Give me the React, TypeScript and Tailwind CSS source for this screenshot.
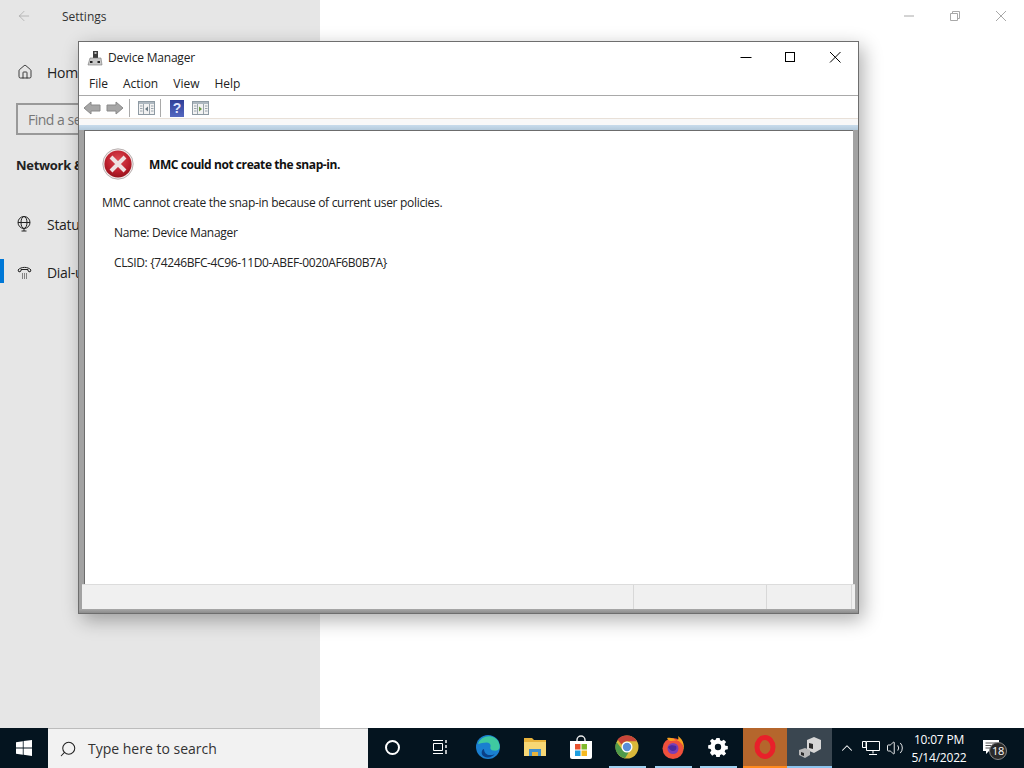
import { ArrowLeft, Home, Search, ChevronUp, Volume2 } from "lucide-react";

const segoe = "font-['Open_Sans','Noto_Sans',sans-serif]";

function WinControls() {
  return (
    <div className="mb-[2px] flex items-center gap-[33px] pr-[17px] text-black">
      <svg width="12" height="12" viewBox="0 0 12 12" className="-mr-[1px]"><path d="M0.500 6.500h11" stroke="currentColor" fill="none" /></svg>
      <svg width="12" height="12" viewBox="0 0 12 12"><rect x="1.500" y="1.500" width="9" height="9" stroke="currentColor" fill="none" /></svg>
      <svg width="12" height="12" viewBox="0 0 12 12"><path d="M1 1l10.500 10.500M11.500 1L1 11.500" stroke="currentColor" fill="none" /></svg>
    </div>
  );
}

function RestoreControls() {
  return (
    <div className="flex h-8 items-center justify-end gap-[34px] pr-[17px] text-[#a8a8a8]">
      <svg width="12" height="12" viewBox="0 0 12 12"><path d="M1 6h10" stroke="currentColor" fill="none" /></svg>
      <svg width="12" height="12" viewBox="0 0 12 12"><path d="M1.500 3.500h7v7h-7zM3.500 3.500v-2h7v7h-2" stroke="currentColor" fill="none" /></svg>
      <svg width="12" height="12" viewBox="0 0 12 12"><path d="M1 1l10 10M11 1L1 11" stroke="currentColor" fill="none" /></svg>
    </div>
  );
}

function DeviceIcon() {
  return (
    <svg width="16" height="16" viewBox="0 0 16 16">
      <rect x="6" y="1" width="5" height="7" fill="#3c3c3c" />
      <rect x="7.500" y="2" width="2" height="2" fill="#bdbdbd" />
      <path d="M3 8h11l1 7H1z" fill="#c9c9c9" stroke="#777" strokeWidth="0.6" />
      <rect x="3" y="11" width="2.500" height="2" fill="#222" />
      <rect x="10.500" y="11" width="2.500" height="2" fill="#222" />
    </svg>
  );
}

function NavArrow({ flip }: { flip?: boolean }) {
  return (
    <svg width="18" height="14" viewBox="0 0 18 14" className={flip ? "-scale-x-100" : ""}>
      <path d="M1 7l7-6v3h9v6H8v3z" fill="#a6a6a6" stroke="#8a8a8a" />
    </svg>
  );
}

function PaneIcon({ play }: { play?: boolean }) {
  return (
    <svg width="17" height="14" viewBox="0 0 17 14">
      <rect x="0.500" y="0.500" width="16" height="13" fill="#f2f2f2" stroke="#8e9aa3" />
      <rect x="1" y="1" width="15" height="2" fill="#aeb8c0" />
      <path d="M5.500 3v10M11.500 3v10" stroke="#9aa4ac" />
      <path d="M2 5h2.500M2 7.500h2.500M2 10h2.500M13 5h2.500M13 7.500h2.500M13 10h2.500" stroke="#9aa4ac" />
      {play
        ? <path d="M7 5.500l3 2.500-3 2.500z" fill="#6b9a45" />
        : <path d="M10 5.500L7 8l3 2.500z" fill="#6c7b86" />}
    </svg>
  );
}

function HelpIcon() {
  return (
    <div className="flex h-[17px] w-[14px] items-center justify-center bg-[linear-gradient(#2f3f98,#5568c0)] font-['Liberation_Sans',sans-serif] text-[14px] font-bold leading-none text-[#dfe4ff]">
      ?
    </div>
  );
}

function ErrorIcon() {
  return (
    <svg width="32" height="32" viewBox="0 0 32 32">
      <defs>
        <radialGradient id="err" cx="50%" cy="35%" r="70%">
          <stop offset="0%" stopColor="#dc4a52" />
          <stop offset="60%" stopColor="#bd1f2d" />
          <stop offset="100%" stopColor="#8d1018" />
        </radialGradient>
      </defs>
      <circle cx="16" cy="16" r="15.200" fill="#f4eaea" stroke="#a8a0a0" strokeWidth="0.8" />
      <circle cx="16" cy="16" r="13.600" fill="url(#err)" />
      <path d="M9 9l14 14M23 9L9 23" stroke="#eee2e2" strokeWidth="4" />
    </svg>
  );
}

function MmcWindow() {
  return (
    <div className={`absolute left-[78px] top-[41px] flex h-[573px] w-[781px] flex-col border border-[#6e6e6e] bg-white shadow-[4px_6px_18px_rgba(0,0,0,0.32)] ${segoe}`}>
      <div className="flex h-[32px] items-center justify-between pl-[8px]">
        <div className="flex items-center gap-[5px]">
          <DeviceIcon />
          <span className="text-[12px] tracking-[-0.2px] text-[#222]">Device Manager</span>
        </div>
        <WinControls />
      </div>
      <div className="flex h-[22px] items-center gap-[15px] border-b border-[#a9a9a9] pb-[2px] pl-[10px] text-[12px] text-[#222]">
        <span>File</span>
        <span>Action</span>
        <span>View</span>
        <span>Help</span>
      </div>
      <div className="flex h-[22px] items-center pl-[4px] pt-[2px]">
        <NavArrow />
        <span className="w-[5px]" />
        <NavArrow flip />
        <span className="ml-[5px] h-[18px] w-px bg-[#a9a9a9]" />
        <span className="ml-[8px]"><PaneIcon /></span>
        <span className="ml-[5px] h-[18px] w-px bg-[#a9a9a9]" />
        <span className="ml-[9px]"><HelpIcon /></span>
        <span className="ml-[8px]"><PaneIcon play /></span>
      </div>
      <div className="h-[1px] bg-[#e8e0d8]" />
      <div className="h-[6px] bg-[#f8f8f8]" />
      <div className="h-[5px] bg-[linear-gradient(#c8dcec,#b4cadc)]" />
      <div className="flex min-h-0 flex-1 flex-col bg-[#a2a2a2]">
        <div className="flex min-h-0 flex-1 pl-[5px] pr-[5px]">
          <div className="flex flex-1 flex-col border-l border-t border-[#6c6c6c] bg-white pl-[17px] text-[12px] tracking-[-0.3px] text-[#222]">
            <div className="mt-[17px] flex items-center gap-[15px]">
              <ErrorIcon />
              <span className="pt-[2px] font-bold tracking-[-0.43px] text-[#111]">MMC could not create the snap-in.</span>
            </div>
            <p className="mt-[15px] leading-[16px]">MMC cannot create the snap-in because of current user policies.</p>
            <p className="mt-[14px] pl-[12px] leading-[16px]">Name: Device Manager</p>
            <p className="mt-[14px] pl-[12px] leading-[16px] tracking-[-0.37px]">CLSID: {"{74246BFC-4C96-11D0-ABEF-0020AF6B0B7A}"}</p>
          </div>
        </div>
        <div className="mx-[3px] flex h-[25px] border-t border-[#dcdcdc] bg-[#f0f0f0]">
          <div className="w-[552px] border-r border-[#d8d8d8]" />
          <div className="w-[133px] border-r border-[#d8d8d8]" />
          <div className="w-[85px] border-r border-[#d8d8d8]" />
        </div>
        <div className="h-[4px] bg-[linear-gradient(#a8a8a8,#8c8c8c)]" />
      </div>
    </div>
  );
}

function Sidebar() {
  return (
    <div className={`flex w-[320px] flex-col bg-[#e6e6e6] tracking-[-0.3px] text-[#222] ${segoe}`}>
      <div className="flex h-8 items-center pl-[16px]">
        <ArrowLeft size={16} strokeWidth={1} className="text-[#a0a0a0]" />
        <span className="ml-[30px] pt-[2px] text-[12px] tracking-normal text-[#333]">Settings</span>
      </div>
      <div className="mt-[24px] flex h-8 items-center pl-[17px]">
        <Home size={16} strokeWidth={1.3} />
        <span className="ml-[14px] text-[14px]">Home</span>
      </div>
      <div className="ml-[16px] mr-[16px] mt-[15px] flex h-[32px] items-center border-2 border-[#999] pl-[10px] text-[14px] tracking-[-0.5px] text-[#777]">
        Find a setting
      </div>
      <div className="mt-[20px] pl-[16px] text-[13px] font-bold leading-[20px]">Network &amp; Internet</div>
      <div className="mt-[33px] flex h-8 items-center pl-[16px] text-[14px]">
        <svg width="16" height="16" viewBox="0 0 16 16" fill="none" stroke="#222">
          <circle cx="8" cy="6.500" r="6" />
          <ellipse cx="8" cy="6.500" rx="3" ry="6" />
          <path d="M2 6.500h12M8 12.500V15M5.500 15h5" />
        </svg>
        <span className="ml-[15px]">Status</span>
      </div>
      <div className="relative mt-[16px] flex h-8 items-center pl-[17px] text-[14px]">
        <span className="absolute left-0 top-[3px] h-[24px] w-[4px] bg-[#0078d7]" />
        <svg width="15" height="15" viewBox="0 0 15 15" fill="none" stroke="#222">
          <path d="M1 5c3-3.500 10-3.500 13 0l-1 2-2-1V4.500h-7V6l-2 1z" />
          <path d="M5 9h1M7 9h1M9 9h1M5 11h1M7 11h1M9 11h1M5 13h1M7 13h1M9 13h1" />
        </svg>
        <span className="ml-[15px]">Dial-up</span>
      </div>
    </div>
  );
}

function TaskItem({ children, w, bar, bg }: { children: React.ReactNode; w: string; bar?: string; bg?: string }) {
  return (
    <div className={`flex h-full flex-col items-center ${w} ${bg ?? ""}`}>
      <div className="flex flex-1 items-center justify-center">{children}</div>
      <div className={`h-[2px] ${bar ?? ""}`} />
    </div>
  );
}

function Taskbar() {
  return (
    <div className={`flex h-10 shrink-0 bg-[#04141f] text-white ${segoe}`}>
      <div className="flex w-[48px] items-center justify-center">
        <svg width="16" height="16" viewBox="0 0 16 16" fill="#fff">
          <path d="M0 2.200l6.800-1V7.600H0zM7.600 1.100L16 0v7.600H7.600zM0 8.400h6.800v6.400l-6.800-1zM7.600 8.400H16V16l-8.400-1.200z" />
        </svg>
      </div>
      <div className="flex w-[320px] items-center border-t border-[#bcbcbc] bg-[#f2f2f2] pl-[11px] text-[14px] text-[#333]">
        <Search size={18} strokeWidth={1.4} className="-scale-x-100 text-[#222]" />
        <span className="ml-[11px]">Type here to search</span>
      </div>
      <div className="flex">
        <TaskItem w="w-[48px]">
          <span className="h-[15px] w-[15px] rounded-full border-2 border-white" />
        </TaskItem>
        <TaskItem w="w-[48px]">
          <svg width="16" height="16" viewBox="0 0 16 16" fill="none" stroke="#fff">
            <path d="M1 1.500h10M1 14.500h10M1.500 4.500h9v7h-9z" />
            <path d="M14 1v3M14 6v3M14 11v4" strokeWidth="1.400" />
          </svg>
        </TaskItem>
        <TaskItem w="w-[48px]">
          <svg width="24" height="24" viewBox="0 0 24 24">
            <circle cx="12" cy="12" r="12" fill="#1a7fd0" />
            <path d="M2 9C4 2 13-1 19 3c4 2.600 5 7 4.500 10-.5 2-3 3-6 2.500-3-.5-3.500-2-3-4 .5-2-1-4-4-4-3 0-6 1-8.500 1.500z" fill="#3fc9a0" />
            <path d="M8 14c0 4 3 6.500 7 6 1.500 0 3-.5 4-1.500-2 3.500-7 5-11 3C4 19 6 14 8 14z" fill="#0b3f86" />
          </svg>
        </TaskItem>
        <TaskItem w="w-[46px]">
          <svg width="22" height="20" viewBox="0 0 22 20">
            <path d="M0 1h8l2 2h12v16H0z" fill="#e8b33c" />
            <rect x="0" y="5" width="22" height="14" fill="#f7d774" />
            <rect x="5" y="12" width="12" height="7" fill="#3f8fcf" />
            <rect x="8" y="15" width="6" height="4" fill="#e8b33c" />
          </svg>
        </TaskItem>
        <TaskItem w="w-[46px]">
          <svg width="22" height="24" viewBox="0 0 22 24">
            <path d="M7 7V5a4 4 0 018 0v2" fill="none" stroke="#eee" strokeWidth="1.400" />
            <path d="M0 6h22v16a2 2 0 01-2 2H2a2 2 0 01-2-2z" fill="#fff" />
            <rect x="5" y="9" width="5.500" height="5.500" fill="#e8512c" />
            <rect x="11.500" y="9" width="5.500" height="5.500" fill="#7fb92c" />
            <rect x="5" y="15.500" width="5.500" height="5.500" fill="#1f9fe0" />
            <rect x="11.500" y="15.500" width="5.500" height="5.500" fill="#f5b921" />
          </svg>
        </TaskItem>
        <TaskItem w="w-[46px]" bar="w-[37px] bg-[#9fd0f0]">
          <svg width="24" height="24" viewBox="0 0 24 24">
            <circle cx="12" cy="12" r="11.500" fill="#d9b83a" />
            <path d="M12 .5a11.500 11.500 0 019.960 5.750H12a5.750 5.750 0 00-5.300 3.500L2.500 4.500A11.500 11.500 0 0112 .5z" fill="#c8453a" />
            <path d="M1.500 7a11.500 11.500 0 008.500 16.300l4-6.500a5.750 5.750 0 01-7.300-3z" fill="#4f9a4a" />
            <circle cx="12" cy="12" r="5.500" fill="#fff" />
            <circle cx="12" cy="12" r="4.200" fill="#5a8fd8" />
          </svg>
        </TaskItem>
        <TaskItem w="w-[46px]" bar="w-[37px] bg-[#9fd0f0]">
          <svg width="24" height="24" viewBox="0 0 24 24">
            <circle cx="12" cy="13.500" r="10.500" fill="#f0503c" />
            <path d="M6 3c1 2 2 3 4 3 4-1 8-1 10 2 2 2 3 5 2 9 2-5 1-12-5-16 1 3 0 4-1 5-3-3-7-4-10-3z" fill="#f9a21e" />
            <circle cx="12" cy="13.500" r="5.500" fill="#7b3fb5" />
            <path d="M7 12c2-2 5-2 8-1 1 2 0 5-3 5-2 0-4-2-5-4z" fill="#4b2a9e" />
          </svg>
        </TaskItem>
        <TaskItem w="w-[44px]" bar="w-[37px] bg-[#9fd0f0]">
          <svg width="20" height="20" viewBox="-1 0 22 20">
            <path fill="#fff" fillRule="evenodd" d="M8.200 0h3.600l.5 2.700 1.800.8 2.300-1.600 2.500 2.500-1.600 2.300.8 1.800 2.700.5v3.600l-2.700.5-.8 1.800 1.600 2.300-2.500 2.500-2.300-1.600-1.800.8-.5 2.700H8.200l-.5-2.700-1.800-.8-2.300 1.600L1.100 16.200l1.600-2.300-.8-1.800L-.8 11.600V8l2.700-.5.8-1.800L1.100 3.400l2.500-2.500 2.300 1.600 1.800-.8zM10 6.500a3.500 3.500 0 100 7 3.500 3.500 0 000-7z" />
          </svg>
        </TaskItem>
        <TaskItem w="ml-[3px] w-[44px]" bg="bg-[#b5662c]" bar="w-full bg-[#ff8a1e]">
          <svg width="24" height="24" viewBox="0 0 24 24">
            <ellipse cx="12" cy="12" rx="8" ry="9.500" fill="none" stroke="#e8202a" strokeWidth="5" />
          </svg>
        </TaskItem>
        <TaskItem w="w-[45px]" bg="bg-[#3a4650]" bar="w-full bg-[#8cc4ee]">
          <svg width="24" height="24" viewBox="0 0 24 24">
            <path d="M9 5l7-3 7 3v9l-7 4-7-3z" fill="#d6d6d6" />
            <path d="M11 8l4 1v5l-4-1z" fill="#2a2a2a" />
            <path d="M1 15l6-2 5 2v5l-5 3-6-3z" fill="#b9b9b9" />
            <path d="M3 17l3 1v3l-3-1z" fill="#2a2a2a" />
          </svg>
        </TaskItem>
      </div>
      <div className="ml-[4px] flex flex-1 items-center">
        <ChevronUp size={18} strokeWidth={1.400} className="ml-[2px]" />
        <svg width="18" height="16" viewBox="0 0 18 16" fill="none" stroke="#fff" className="ml-[6px]">
          <path d="M4.500 1.500h13v9h-13zM11 10.500v3M7 14.500h8M.5 1.500h3.500v6H.5z" />
        </svg>
        <Volume2 size={18} strokeWidth={1.200} className="ml-[6px]" />
        <div className="ml-[9px] mt-[2px] flex w-[52px] flex-col items-center text-[12px] leading-[18px] tracking-[-0.2px]">
          <span>10:07 PM</span>
          <span>5/14/2022</span>
        </div>
        <div className="relative ml-[18px] h-[16px] w-[16px]">
          <svg width="16" height="14" viewBox="0 0 16 14">
            <path d="M0 0h16v11H6l-3 3v-3H0z" fill="#fff" />
            <path d="M2.500 3h11M2.500 5.500h11M2.500 8h7" stroke="#555" />
          </svg>
          <span className="absolute left-[6px] top-[2px] flex h-[18px] w-[18px] items-center justify-center rounded-full border border-[#888] bg-[#2a2a2a] text-[11px] tracking-[-0.3px] text-white">18</span>
        </div>
      </div>
    </div>
  );
}

export default function App() {
  return (
    <div className="relative flex h-[768px] w-[1024px] flex-col overflow-hidden bg-white">
      <div className="flex min-h-0 flex-1">
        <Sidebar />
        <div className="flex-1 bg-white">
          <RestoreControls />
        </div>
      </div>
      <Taskbar />
      <MmcWindow />
    </div>
  );
}
